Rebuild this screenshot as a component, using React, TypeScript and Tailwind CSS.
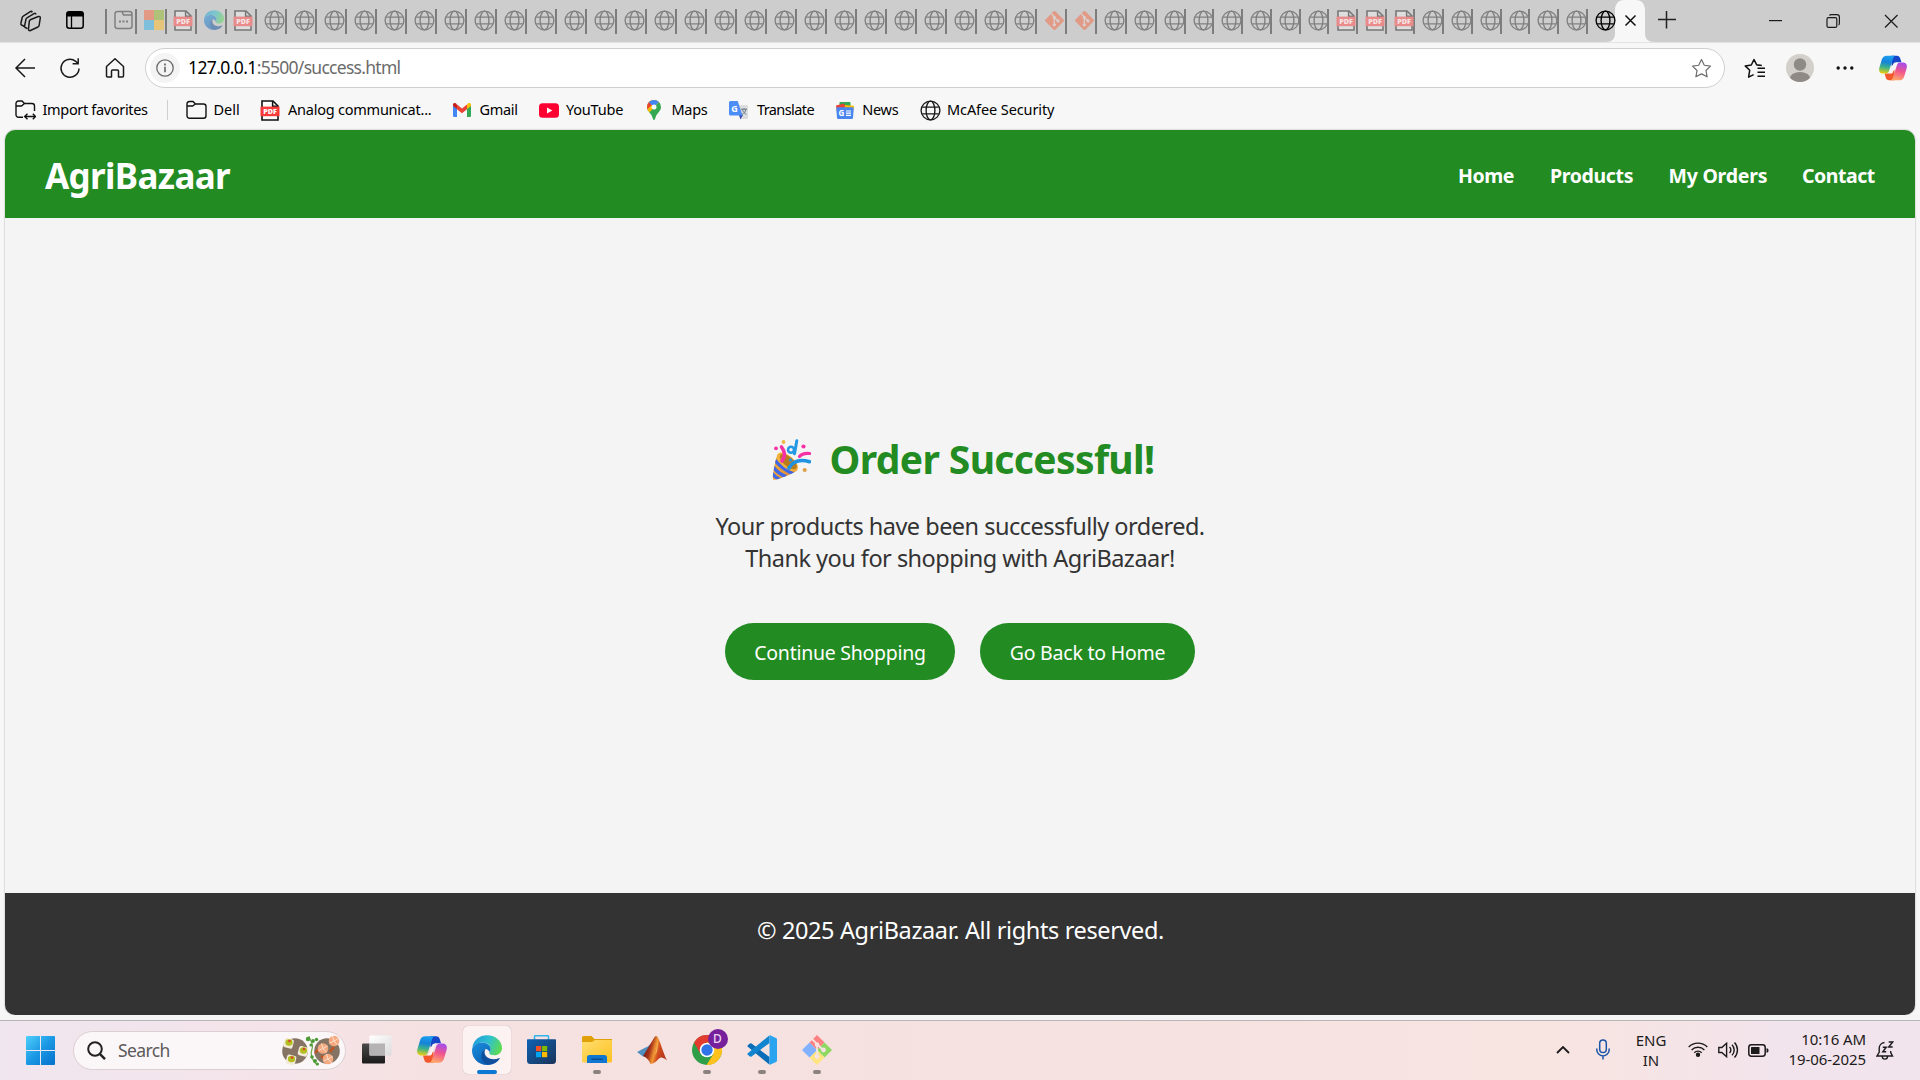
import React, { ReactNode } from 'react';

function Globe({ className = 'text-[#808080]' }: { className?: string }) {
  return (
    <svg className={`block h-[21px] w-[21px] shrink-0 ${className}`} viewBox="0 0 21 21" fill="none" stroke="currentColor" strokeWidth="1.35">
      <circle cx="10.5" cy="10.5" r="9.4" />
      <ellipse cx="10.5" cy="10.5" rx="4.4" ry="9.4" />
      <path d="M2.2 7.1h16.6M2.2 13.9h16.6" />
    </svg>
  );
}

function Pdf({ faded = false }: { faded?: boolean }) {
  return (
    <svg className="block h-[21px] w-[20px] shrink-0" viewBox="0 0 20 21">
      <path d="M2 8V1h11l5 5v14H2v-4" fill={faded ? '#dedede' : '#fff'} stroke={faded ? '#777' : '#111'} strokeWidth="1.6" />
      <path d="M12.6 1v5.2H18" fill="none" stroke={faded ? '#777' : '#111'} strokeWidth="1.5" />
      <rect x="0.5" y="6.6" width="19" height="9.6" fill={faded ? '#e88b8b' : '#f73b3b'} />
      <text x="10" y="14.1" textAnchor="middle" fontSize="7.2" fontWeight="800" fontFamily="Open Sans, sans-serif" fill={faded ? '#f6e4e4' : '#fff'}>PDF</text>
    </svg>
  );
}

function GitTab() {
  return (
    <svg className="block h-[21px] w-[21px] shrink-0" viewBox="0 0 21 21">
      <rect x="3.4" y="3.4" width="14.2" height="14.2" rx="1.2" fill="#e09a86" transform="rotate(45 10.5 10.5)" />
      <path d="M7.5 3.8 10.3 7v8M10.3 7.6l3.6 3.2" stroke="#d8d0ce" strokeWidth="1.3" fill="none" />
      <circle cx="10.3" cy="7.2" r="1.5" fill="#d8d0ce" />
      <circle cx="10.3" cy="14.8" r="1.6" fill="#d8d0ce" />
      <circle cx="14" cy="10.9" r="1.6" fill="#d8d0ce" />
    </svg>
  );
}

function Edge({ className }: { className: string }) {
  return (
    <svg className={className} viewBox="0 0 30 30">
      <defs>
        <linearGradient id="edgeTop" x1="0" y1="0.3" x2="1" y2="0.6">
          <stop offset="0" stopColor="#1f9ed8" />
          <stop offset="0.5" stopColor="#2fc0cf" />
          <stop offset="1" stopColor="#5fdc4e" />
        </linearGradient>
        <linearGradient id="edgeLeft" x1="0" y1="0" x2="0.5" y2="1">
          <stop offset="0" stopColor="#1b8fdc" />
          <stop offset="1" stopColor="#0b62b8" />
        </linearGradient>
      </defs>
      <path d="M0.3 13C1.3 5 7.600.3 15 .3 24 .3 30 6.500 30 13c0 4.500-3.500 7.300-7.500 7.300-3.200 0-5.300-1-5.300-2.300 0-1 1.400-1.300 1.400-4 0-3.400-3.200-6.500-7.600-6.500C6 7.500 2 9.800.3 13z" fill="url(#edgeTop)" />
      <path d="M0 15.500C0 11 4.500 7.500 10.300 7.500c4.600 0 8.300 3 8.300 6.500 0 1.500-.6 2.500-1 3-1-2-2.500-3-4-3-1.500.5-3.100 2.700-3.100 6 0 4.500 3.500 9 8.500 9.500-1.200.4-2.500.5-4 .5C6.500 30 0 23.500 0 15.500z" fill="url(#edgeLeft)" />
      <path d="M13.600 14c-2.500 1-4.300 3.700-4.300 7 0 5 3.700 8.600 9 8.800 4-.8 7.300-3 9.200-5.900.4-.6-.1-1-.7-.7-1.500.7-3.300 1-5 1-5.200 0-9.200-3-9.200-6.700 0-1.500.4-2.600 1-3.500z" fill="#0f4f9e" />
    </svg>
  );
}

function Copilot({ className }: { className: string }) {
  return (
    <svg className={className} viewBox="0 0 30 27">
      <defs>
        <linearGradient id="cpLeft" x1="0.4" y1="0" x2="0.25" y2="1">
          <stop offset="0" stopColor="#1b9df0" />
          <stop offset="0.35" stopColor="#1583d8" />
          <stop offset="0.65" stopColor="#3fb488" />
          <stop offset="1" stopColor="#f2cf0a" />
        </linearGradient>
        <linearGradient id="cpRight" x1="0.7" y1="0" x2="0.45" y2="1">
          <stop offset="0" stopColor="#a24cf0" />
          <stop offset="0.5" stopColor="#f0568c" />
          <stop offset="1" stopColor="#ffa66b" />
        </linearGradient>
      </defs>
      <path d="M13 .3h6c2.200 0 3.200 1.200 3.800 3l1.200 4h-5.500l-5 4z" fill="#1546c8" />
      <path d="M17 26.700h-6c-2.200 0-3.200-1.200-3.800-3L6 19.500h5.500l5-4z" fill="#f2582c" />
      <path d="M8.500.3H18c-1.700.3-2.500 1.500-3 3.200l-4 12.500c-.7 2.300-1.700 3.500-4 3.500H4.500C1 19.500-.5 17 .3 13.500l2.700-9C3.900 1.600 5.500.3 8.500.3z" fill="url(#cpLeft)" />
      <path d="M21.500 26.700H12c1.700-.3 2.500-1.500 3-3.200L19 11c.7-2.300 1.700-3.500 4-3.500h2.500c3.500 0 5 2.500 4.200 6l-2.700 9c-.9 2.900-2.500 4.200-5.500 4.200z" fill="url(#cpRight)" />
      <path d="M17.800 7.500h1.500c-1.200 1-1.700 2.200-2.200 3.800l-2.200 6.800c-.3.900-.9 1.400-1.700 1.400h-2.300c1.200-1 1.700-2.200 2.200-3.800l2.100-6.400c.4-1.100 1.200-1.800 2.600-1.800z" fill="#f8f2f4" />
    </svg>
  );
}

function Tab({ children, narrow = false }: { children: ReactNode; narrow?: boolean }) {
  return (
    <div className={`flex h-[25px] shrink-0 items-start border-r-2 border-[#7d7d7d] pt-px ${narrow ? 'w-[28.73px] pl-[7px]' : 'w-[30px] justify-end'}`}>
      {children}
    </div>
  );
}

function TabStrip() {
  return (
    <div className="flex h-[42px] bg-[#cdcdcd] pt-[9px]">
      <div className="flex h-[25px] w-[107px] shrink-0 border-r-2 border-[#7d7d7d] pl-[19px]">
        <svg className="h-[24px] w-[24px]" viewBox="0 0 24 24" fill="#cdcdcd" stroke="#1a1a1a" strokeWidth="1.5">
          <path d="M5.500 17.500 2.600 16a1.500 1.500 0 0 1-.7-1.800L3.300 8.300a2 2 0 0 1 1-1.200l7-4.500a1.500 1.500 0 0 1 2 .7" />
          <path d="M8.500 19.700 6.300 18.500a1.500 1.500 0 0 1-.7-1.600l1.400-6.800a2 2 0 0 1 1-1.300l7-4.200c.9-.5 1.800-.2 2 .8" />
          <path d="m11.300 10.800 8-3.300c1.200-.4 2.200.3 2 1.500l-1.200 7.500a2 2 0 0 1-1.200 1.500l-7.400 3.500c-1.200.5-2.200-.2-2-1.500l.8-7.700a2 2 0 0 1 1-1.500z" />
        </svg>
        <svg className="ml-[23px] mt-[2px] h-[18px] w-[18px]" viewBox="0 0 18 18">
          <rect x="0.8" y="0.8" width="16.4" height="16.4" rx="2.5" fill="none" stroke="#000" strokeWidth="1.5" />
          <path d="M.5 5.500V3A2.500 2.500 0 0 1 3 .5h12A2.500 2.500 0 0 1 17.500 3v2.500z" />
          <path d="M5.500 5v12" stroke="#000" strokeWidth="1.3" />
        </svg>
      </div>
      <Tab>
        <svg className="mr-[2px] h-[20px] w-[19px]" viewBox="0 0 19 20" fill="none" stroke="#808080" strokeWidth="1.5">
          <rect x="1" y="1.5" width="17" height="17" rx="2.5" />
          <path d="M8 1.500 9.500 5H18" />
          <path d="M5 11.500h2M8.500 11.500h2M12 11.500h2" strokeWidth="2.2" />
        </svg>
      </Tab>
      <Tab>
        <div className="mr-px grid h-[20px] w-[20px] grid-cols-2">
          <div className="bg-[#e29a85]" /><div className="bg-[#afc27a]" />
          <div className="bg-[#7fbfdc]" /><div className="bg-[#e6c578]" />
        </div>
      </Tab>
      <Tab><div className="mr-[2px]"><Pdf faded /></div></Tab>
      <Tab><Edge className="mr-px h-[20px] w-[20px] opacity-50" /></Tab>
      <Tab><div className="mr-[2px]"><Pdf faded /></div></Tab>
      {Array.from({ length: 26 }, (_, i) => <Tab key={i}><Globe /></Tab>)}
      <Tab><GitTab /></Tab>
      <Tab><GitTab /></Tab>
      <Tab><Globe /></Tab>
      <Tab><Globe /></Tab>
      {Array.from({ length: 6 }, (_, i) => <Tab key={i} narrow><Globe /></Tab>)}
      {Array.from({ length: 3 }, (_, i) => <Tab key={i} narrow><Pdf faded /></Tab>)}
      {Array.from({ length: 6 }, (_, i) => <Tab key={i} narrow><Globe /></Tab>)}
      <div className="relative w-[58px] shrink-0">
        <svg className="absolute -top-[9px] left-[18px] h-[42px] w-[50px]" viewBox="0 0 50 42">
          <path d="M0 42c6 0 9-3 9-9V10C9 4 12.500 0 18 0h12c5.500 0 9 4 9 10v23c0 6 3 9 9 9z" fill="#f7f7f7" />
          <path d="m19.500 15.500 10 10m0-10-10 10" stroke="#111" strokeWidth="1.5" />
        </svg>
        <div className="relative ml-[7px] mt-px"><Globe className="text-black" /></div>
      </div>
      <svg className="ml-[11px] mt-[1px] h-[20px] w-[20px] shrink-0" viewBox="0 0 20 20"><path d="M1 9.500h18M9.500 1v17.500" stroke="#222" strokeWidth="1.5" /></svg>
      <svg className="ml-auto mt-[5px] h-[14px] w-[130px] shrink-0" viewBox="0 0 130 14" fill="none" stroke="#1a1a1a" strokeWidth="1.2">
        <path d="M0 6.600h13" />
        <rect x="58" y="3.600" width="9.800" height="9.800" rx="1.5" />
        <path d="M60.400 1.500Q60.900.6 62.400.6h5.500a2.500 2.500 0 0 1 2.500 2.500v6q0 1.500-.8 2" />
        <path d="m116 1 12.500 12.500m0-12.500L116 13.500" />
      </svg>
      <div className="w-[21px] shrink-0" />
    </div>
  );
}

function Toolbar() {
  return (
    <div className="flex h-[48px] items-center border-t border-[#e3e3e3] bg-[#f7f7f7] pb-[2px] pl-[14px] pt-[5px] text-black">
      <svg className="h-[20px] w-[22px]" viewBox="0 0 22 20" fill="none" stroke="#1a1a1a" strokeWidth="1.5"><path d="M21 10H2M11 1 2 10l9 9" /></svg>
      <svg className="ml-[23px] h-[22px] w-[22px]" viewBox="0 0 22 22" fill="none" stroke="#1a1a1a" strokeWidth="1.5"><path d="M20 11.500a9 9 0 1 1-3.300-7.200L19 6.500M19.200 1.200v5.600h-5.600" /></svg>
      <svg className="ml-[24px] h-[22px] w-[20px]" viewBox="0 0 20 22" fill="none" stroke="#1a1a1a" strokeWidth="1.5" strokeLinejoin="round"><path d="M1.500 9.500 10 1.700l8.500 7.800V19a1 1 0 0 1-1 1h-4v-6a1 1 0 0 0-1-1h-5a1 1 0 0 0-1 1v6h-4a1 1 0 0 1-1-1z" /></svg>
      <div className="ml-[20px] flex h-[40px] w-[1580px] shrink-0 items-center rounded-full border border-[#cfcfcf] bg-white pl-[4px] pr-[12px] font-['Noto_Sans',sans-serif] text-[17.5px]">
        <div className="flex h-[30px] w-[30px] items-center justify-center rounded-full bg-[#f4f4f4]">
          <svg className="h-[18px] w-[18px]" viewBox="0 0 18 18" fill="none" stroke="#6a6a6a" strokeWidth="1.3"><circle cx="9" cy="9" r="8.200" /><path d="M9 7.800v5.400" strokeWidth="1.7" /><path d="M9 4.400v2" strokeWidth="1.8" /></svg>
        </div>
        <span className="-mt-[2px] ml-[8px] whitespace-nowrap tracking-[-0.6px]">127.0.0.1</span>
        <span className="-mt-[2px] whitespace-nowrap tracking-[-0.72px] text-[#6b6b6b]">:5500/success.html</span>
        <svg className="ml-auto h-[21px] w-[21px]" viewBox="0 0 24 24" fill="none" stroke="#6e6e6e" strokeWidth="1.4" strokeLinejoin="round"><path d="m12 1.800 3.200 6.500 7.100 1-5.200 5 1.300 7.200L12 18.100l-6.400 3.400 1.300-7.200-5.200-5 7.100-1z" /></svg>
      </div>
      <svg className="ml-[19px] h-[21px] w-[22px] shrink-0" viewBox="0 0 22 21" fill="none" stroke="#111" strokeWidth="1.5" strokeLinejoin="round"><path d="M14.500 7.200 12.700 6.800 10 1.500 7.300 7 1.200 7.900l4.500 4.400-1.100 6.900 5-2.600M14.500 6.900 17.800 7.400M13.500 10.200H21M13.500 14.200H21M13.500 18.200H21" /></svg>
      <svg className="ml-[20px] h-[28px] w-[28px] shrink-0" viewBox="0 0 28 28">
        <clipPath id="avatar"><circle cx="14" cy="14" r="14" /></clipPath>
        <circle cx="14" cy="14" r="14" fill="#d3d0cc" />
        <g clipPath="url(#avatar)" fill="#8f8a86"><circle cx="14" cy="10.500" r="6.200" /><ellipse cx="14" cy="24" rx="10" ry="6" /></g>
      </svg>
      <svg className="ml-[22px] h-[6px] w-[18px] shrink-0" viewBox="0 0 18 6" fill="#111"><circle cx="2.200" cy="3" r="1.700" /><circle cx="9" cy="3" r="1.700" /><circle cx="15.800" cy="3" r="1.700" /></svg>
      <Copilot className="ml-[25px] h-[26px] w-[28px] shrink-0" />
    </div>
  );
}

function Folder({ sync = false }: { sync?: boolean }) {
  return (
    <svg className="h-[20px] w-[21px]" viewBox="0 0 21 20" fill="none" stroke="#111" strokeWidth="1.4">
      {sync ? (
        <>
          <path d="M8 17.300H3.500a2.500 2.500 0 0 1-2.500-2.500V3.500A2.500 2.500 0 0 1 3.500 1H7l2.500 2.500h7.500A2.500 2.500 0 0 1 19.500 6v5M1 6h5.500L9.500 3.500" />
          <path d="M10 16.500h10.500M12.500 13.800l-2.800 2.700 2.800 2.700M17.800 13.800l2.800 2.700-2.800 2.700" />
        </>
      ) : (
        <path d="M1 6V3.800A2.500 2.500 0 0 1 3.500 1.500H7L9.500 4h8A2.500 2.500 0 0 1 20 6.500v9.200a2.500 2.500 0 0 1-2.500 2.500h-14A2.500 2.500 0 0 1 1 15.700zM1 6h5.500L9.500 4" />
      )}
    </svg>
  );
}

function Bookmark({ cell, iconBox, tracking, icon, label }: { cell: string; iconBox: string; tracking: string; icon: ReactNode; label: string }) {
  return (
    <div className={`flex shrink-0 items-center ${cell}`}>
      <div className={`shrink-0 ${iconBox}`}>{icon}</div>
      <span className={`whitespace-nowrap ${tracking}`}>{label}</span>
    </div>
  );
}

function BookmarksBar() {
  return (
    <div className="flex h-[40px] items-center bg-[#f7f7f7] pl-[15px] font-['Noto_Sans',sans-serif] text-[14.5px] text-black">
      <Bookmark cell="w-[152px]" iconBox="w-[27.5px]" tracking="tracking-[-0.33px]" icon={<Folder sync />} label="Import favorites" />
      <div className="mr-[18px] h-[20px] w-px shrink-0 bg-[#cfcfcf]" />
      <Bookmark cell="w-[74px]" iconBox="w-[27.5px]" tracking="tracking-[0px]" icon={<Folder />} label="Dell" />
      <Bookmark cell="w-[193px]" iconBox="w-[28px]" tracking="tracking-[-0.23px]" icon={<Pdf />} label="Analog communicat..." />
      <Bookmark
        cell="w-[86px]" iconBox="w-[26.5px]" tracking="tracking-[-0.33px]" label="Gmail"
        icon={
          <svg className="h-[14px] w-[18px]" viewBox="0 0 18 14">
            <path d="M0 2.500v10.300A1.200 1.200 0 0 0 1.200 14H4V5.500z" fill="#4285f4" />
            <path d="M18 2.500v10.300a1.200 1.200 0 0 1-1.200 1.200H14V5.500z" fill="#34a853" />
            <path d="M14 1.500V6l4-3V1.800C18 .2 16.200-.5 15 .5z" fill="#fbbc04" />
            <path d="M0 1.800V3l4 3V1.500L3 .5C1.800-.5 0 .2 0 1.800z" fill="#c5221f" />
            <path d="M4 1.500v4.700l5 4 5-4V1.500L9 5.500z" fill="#ea4335" />
          </svg>
        }
      />
      <Bookmark
        cell="w-[108px]" iconBox="w-[27px]" tracking="tracking-[-0.2px]" label="YouTube"
        icon={<svg className="h-[15px] w-[20px]" viewBox="0 0 20 15"><rect width="20" height="14.5" y="0.3" rx="3.5" fill="#ff0033" /><path d="m8 4.500 5.300 3L8 10.500z" fill="#fff" /></svg>}
      />
      <Bookmark
        cell="w-[82px]" iconBox="w-[24.5px]" tracking="tracking-[-0.3px]" label="Maps"
        icon={
          <svg className="h-[20px] w-[14px]" viewBox="0 0 14 20">
            <clipPath id="pin"><path d="M7 0a7 7 0 0 1 7 7c0 4.500-4.300 6-5.500 10.500C8.100 19 7.800 20 7 20s-1.100-1-1.500-2.500C4.300 13 0 11.500 0 7a7 7 0 0 1 7-7z" /></clipPath>
            <g clipPath="url(#pin)">
              <path d="M0 0h14v20H0z" fill="#34a853" />
              <path d="M0 15 14 0H0z" fill="#fbbc04" />
              <path d="M0 9.500 7 3 3 0H0z" fill="#ea4335" />
              <path d="M2 2.500 7 7l7-7H3z" fill="#4285f4" />
            </g>
            <circle cx="7" cy="7" r="2.500" fill="#f7f7f7" />
          </svg>
        }
      />
      <Bookmark
        cell="w-[107px]" iconBox="w-[28px]" tracking="tracking-[-0.6px]" label="Translate"
        icon={
          <svg className="h-[20px] w-[20px]" viewBox="0 0 20 20">
            <path d="M8 5h9.500A1.500 1.500 0 0 1 19 6.500v11a1.500 1.500 0 0 1-1.500 1.500H11z" fill="#dcdcdc" />
            <path d="m10 15 4 0-2.500 4.500z" fill="#3c4fb0" />
            <path d="M1.500 1h7.200l4.800 14.500h-12A1.500 1.500 0 0 1 0 14V2.500A1.500 1.500 0 0 1 1.500 1z" fill="#4d8df6" />
            <text x="2.2" y="11.5" fontSize="9" fontWeight="700" fontFamily="Open Sans, sans-serif" fill="#fff">G</text>
            <path d="M12 9.200h6M15 8v1.200M17 9.200c-.5 2.500-2.500 4.500-4 5.300M13.300 9.500c.8 2.500 2.500 4 4 5" stroke="#66788a" fill="none" />
          </svg>
        }
      />
      <Bookmark
        cell="w-[83.5px]" iconBox="w-[26.3px]" tracking="tracking-[-0.3px]" label="News"
        icon={
          <svg className="h-[17px] w-[18px]" viewBox="0 0 18 17">
            <rect x="3.5" y="0" width="11" height="6" rx="0.8" fill="#34a853" />
            <path d="M0 3.500 8 1.500l2 5-1 10-7.500-2z" fill="#ea4335" />
            <path d="m9 3 9 .8-1.500 10H8z" fill="#fbbc04" />
            <path d="M.3 6.500A1.200 1.200 0 0 1 1.500 5.300h15a1.200 1.200 0 0 1 1.200 1.200L17 16a1.200 1.200 0 0 1-1.200 1H2.200A1.200 1.200 0 0 1 1 16z" fill="#4a86f0" />
            <text x="2.6" y="14" fontSize="8" fontWeight="700" fontFamily="Open Sans, sans-serif" fill="#fff">G</text>
            <path d="M10 9h5M10 11.200h5M10 13.400h5" stroke="#fff" strokeWidth="1.2" />
          </svg>
        }
      />
      <Bookmark cell="" iconBox="w-[27.5px]" tracking="tracking-[-0.1px]" icon={<Globe className="text-[#1a1a1a]" />} label="McAfee Security" />
    </div>
  );
}

function Party() {
  return (
    <svg className="h-[41px] w-[39px] shrink-0" viewBox="0 0 39 41">
      <defs>
        <linearGradient id="cone" x1="0" y1="0" x2="1" y2="0.5"><stop offset="0" stopColor="#f7b13a" /><stop offset="1" stopColor="#d98a3c" /></linearGradient>
        <clipPath id="coneClip"><path d="M6 15C4 17 .8 34 .9 39.500c0 1 .8 1.500 2 1.300C9 39.500 22 34.500 25.500 31 20 29 10 22 6 15z" /></clipPath>
      </defs>
      <path d="M6 15C4 17 .8 34 .9 39.500c0 1 .8 1.500 2 1.300C9 39.500 22 34.500 25.500 31 20 29 10 22 6 15z" fill="url(#cone)" />
      <g clipPath="url(#coneClip)" fill="none" stroke="#3f66e8" strokeWidth="3.2">
        <path d="M2 20c5 7 10 11 20 15M0 26.500c4 5.500 8 9 14 11M-1 33c3 4 5 6 9 7.500" />
      </g>
      <ellipse cx="15.500" cy="23" rx="12.500" ry="6.300" transform="rotate(40 15.5 23)" fill="#f2b13a" />
      <ellipse cx="16.300" cy="22.600" rx="10.500" ry="4.700" transform="rotate(40 16.3 22.6)" fill="#b97b1c" />
      <path d="M10 22c3-4 3.800-8.500-.5-14" fill="none" stroke="#f531a5" strokeWidth="3.6" strokeLinecap="round" />
      <path d="M17 29c4-7 11-9 20.500-6.300" fill="none" stroke="#1f93e3" strokeWidth="3.6" strokeLinecap="round" />
      <path d="M27.500 17.500c2-2.500 5-3.500 10-3" fill="none" stroke="#f531a5" strokeWidth="3.2" strokeLinecap="round" />
      <path d="M24.800 1.800c-.8 4-1.300 8-2.300 13" fill="none" stroke="#2399e6" strokeWidth="3" strokeLinecap="round" />
      <circle cx="19" cy="10.800" r="3" fill="none" stroke="#2399e6" strokeWidth="2.6" />
      <circle cx="11.500" cy="3" r="1.900" fill="#f1b740" /><circle cx="4" cy="9.300" r="1.900" fill="#f531a5" />
      <circle cx="31.500" cy="7.500" r="2.100" fill="#f531a5" /><circle cx="32.700" cy="31" r="2.100" fill="#dca047" />
      <circle cx="18.500" cy="21" r="1.800" fill="#2b95e0" />
    </svg>
  );
}

function Page() {
  return (
    <div className="mx-[5px] flex h-[885px] flex-col overflow-hidden rounded-[10px] bg-[#f4f4f4] font-['Noto_Sans',sans-serif] shadow-[0_0_2px_rgba(0,0,0,0.35)]">
      <header className="flex h-[88px] shrink-0 items-center justify-between bg-[#228b22] pl-10 pr-[39px] pt-[4px] text-white">
        <h1 className="text-[35px] font-bold tracking-[-0.65px]">AgriBazaar</h1>
        <nav className="flex gap-[35px] whitespace-nowrap text-[19.5px] font-bold">
          <a className="w-[57px] tracking-[-0.45px]">Home</a>
          <a className="w-[83.5px] tracking-[-0.35px]">Products</a>
          <a className="w-[98.5px] tracking-[-0.23px]">My Orders</a>
          <a className="w-[74px] tracking-[-0.48px]">Contact</a>
        </nav>
      </header>
      <main className="flex flex-1 flex-col items-center pt-[214px]">
        <h2 className="flex h-[54px] items-center gap-[19px] whitespace-nowrap pl-[6px] text-[39px] font-bold leading-[54px] tracking-[-0.63px] text-[#228b22]">
          <Party />
          <span>Order Successful!</span>
        </h2>
        <p className="mt-6 text-center text-[23.5px] leading-8 tracking-[-0.52px] text-[#333333]">
          Your products have been successfully ordered.<br />Thank you for shopping with AgriBazaar!
        </p>
        <div className="mt-[49px] flex gap-[25px] text-[19.5px] text-white">
          <a className="flex h-[57px] w-[230px] items-center justify-center rounded-full bg-[#228b22] pt-[2px] tracking-[-0.27px]">Continue Shopping</a>
          <a className="flex h-[57px] w-[215px] items-center justify-center rounded-full bg-[#228b22] pt-[2px] tracking-[-0.22px]">Go Back to Home</a>
        </div>
      </main>
      <footer className="h-[122px] shrink-0 bg-[#333333] pl-px pt-[21px] text-center text-[23.5px] leading-8 tracking-[-0.37px] text-white">
        © 2025 AgriBazaar. All rights reserved.
      </footer>
    </div>
  );
}

function TaskIcon({ children, running = false, active = false }: { children: ReactNode; running?: boolean; active?: boolean }) {
  return (
    <div className="flex w-[55px] shrink-0 justify-center pt-[5px]">
      <div className={`relative flex h-[48px] w-[48px] items-center justify-center rounded-[5px] pb-px ${active ? 'bg-[#fbf2f1] shadow-[0_0_1px_rgba(0,0,0,0.3)]' : ''}`}>
        {children}
        {running && <div className="absolute bottom-0 h-[4px] w-[8px] rounded-full bg-[#8b8280]" />}
        {active && <div className="absolute bottom-0 h-[4px] w-[20px] rounded-full bg-[#0b78d4]" />}
      </div>
    </div>
  );
}

function Food() {
  const canapes = [[6.5, 7.5], [21, 15.5], [9, 24]];
  const shrimps = [[52, 6], [41, 13.5], [46, 24]];
  return (
    <svg className="block h-[31px] w-[59px]" viewBox="0 0 59 31">
      <circle cx="13" cy="16" r="12.800" fill="#857463" />
      <circle cx="45" cy="16" r="12.800" fill="#857463" />
      {canapes.map(([x, y]) => (
        <g key={x}>
          <rect x={x - 4.5} y={y - 4} width="9.5" height="9.5" rx="2" fill="#f3ead8" transform={`rotate(15 ${x} ${y})`} />
          <ellipse cx={x + 0.5} cy={y} rx="3.600" ry="3.200" fill="#b3bf20" />
          <circle cx={x + 1} cy={y - 1.5} r="1.300" fill="#d8442a" />
        </g>
      ))}
      <path d="m33 18 4-4M48 17l4-5M39 21l3 2" stroke="#c4531f" strokeWidth="2.4" />
      {shrimps.map(([x, y]) => (
        <g key={x}>
          <circle cx={x} cy={y} r="5.300" fill="#f6a87e" />
          <path d={`M${x} ${y}l4.500-2.500M${x} ${y}l3.500 4M${x} ${y}l-4.500 2M${x} ${y}l-1.500-5`} stroke="#fbe0d0" strokeWidth="1" />
        </g>
      ))}
      <path d="M27 1c1 5 5 8 3 13s-1 10 5 16" fill="none" stroke="#6da349" strokeWidth="1.2" />
      <g fill="#4c9a35">
        <circle cx="26" cy="4" r="2.200" /><circle cx="31" cy="6" r="1.900" /><circle cx="34.500" cy="4.500" r="1.700" />
        <circle cx="29" cy="10" r="1.600" /><circle cx="30" cy="22" r="1.800" /><circle cx="33" cy="26" r="2" /><circle cx="35.500" cy="29" r="1.500" />
      </g>
    </svg>
  );
}

function Taskbar() {
  return (
    <div className="flex h-[60px] border-t border-[#b9b4b5] bg-[linear-gradient(90deg,#f0e6ef_0px,#f4e4ea_260px,#f5e1e1_420px,#f5e2e0_900px,#f8e4e1_1560px,#f2e4ec_1780px,#f1e4ec_1920px)] font-['Noto_Sans',sans-serif]">
      <div className="ml-[26px] mt-[15px] h-[29px] w-[29px] shrink-0">
        <svg viewBox="0 0 29 29">
          <defs><linearGradient id="win" x1="0" y1="0" x2="29" y2="29" gradientUnits="userSpaceOnUse"><stop offset="0" stopColor="#4fd0fb" /><stop offset="0.5" stopColor="#1b98e4" /><stop offset="1" stopColor="#0670cb" /></linearGradient></defs>
          <path d="M0 1a1 1 0 0 1 1-1h13v14H0zM15 0h13a1 1 0 0 1 1 1v13H15zM0 15h14v14H1a1 1 0 0 1-1-1zM15 15h14v13a1 1 0 0 1-1 1H15z" fill="url(#win)" />
        </svg>
      </div>
      <div className="ml-[18px] mt-[10px] flex h-[39px] w-[273px] shrink-0 items-center rounded-full border border-[#dccfd2] bg-[#fbf7f8] pl-[13px] pr-[4px]">
        <svg className="h-[19px] w-[19px]" viewBox="0 0 19 19" fill="none" stroke="#222" strokeWidth="2"><circle cx="8" cy="8" r="6.800" /><path d="m12.800 12.800 5.200 5.400" strokeWidth="2.4" /></svg>
        <span className="ml-[12px] text-[17.5px] tracking-[-0.6px] text-[#5d5a5b]">Search</span>
        <div className="ml-auto"><Food /></div>
      </div>
      <div className="ml-[3px] flex">
        <TaskIcon>
          <svg className="h-[29px] w-[30px]" viewBox="0 0 30 29">
            <defs>
              <linearGradient id="tvDark" x1="0" y1="0" x2="0" y2="1"><stop offset="0" stopColor="#4a4a4a" /><stop offset="1" stopColor="#1b1b1b" /></linearGradient>
              <linearGradient id="tvLight" x1="0" y1="0" x2="1" y2="1"><stop offset="0" stopColor="#fff" /><stop offset="1" stopColor="#dcdcdc" /></linearGradient>
            </defs>
            <rect x="0" y="8.500" width="23" height="20" rx="1" fill="url(#tvDark)" />
            <rect x="7.500" y="0.500" width="22" height="20" rx="1" fill="url(#tvLight)" />
            <rect x="7.500" y="8.500" width="15.500" height="12" fill="#b5b3b3" />
          </svg>
        </TaskIcon>
        <TaskIcon><Copilot className="h-[27px] w-[30px]" /></TaskIcon>
        <TaskIcon active><Edge className="h-[30px] w-[30px]" /></TaskIcon>
        <TaskIcon>
          <svg className="h-[29px] w-[29px]" viewBox="0 0 29 29">
            <defs><linearGradient id="store" x1="0" y1="0" x2="1" y2="1"><stop offset="0" stopColor="#0d62b4" /><stop offset="1" stopColor="#1b3358" /></linearGradient></defs>
            <path d="M7.500 6V1.500a.8.800 0 0 1 .8-.8h12.400a.8.800 0 0 1 .8.800V6" fill="none" stroke="#2fb4ee" strokeWidth="1.5" />
            <path d="M0 5a.8.800 0 0 1 .8-.8h27.400A.8.800 0 0 1 29 5v20.500a3.500 3.500 0 0 1-3.500 3.500h-22A3.500 3.500 0 0 1 0 25.500z" fill="url(#store)" />
            <path d="M9 11h5.200v5.200H9z" fill="#f25022" /><path d="M15 11h5.200v5.200H15z" fill="#7fba00" />
            <path d="M9 17h5.200v5.200H9z" fill="#00a4ef" /><path d="M15 17h5.200v5.200H15z" fill="#ffb900" />
          </svg>
        </TaskIcon>
        <TaskIcon running>
          <svg className="h-[27px] w-[30px]" viewBox="0 0 30 27">
            <defs><linearGradient id="fold" x1="0" y1="0" x2="1" y2="1"><stop offset="0" stopColor="#ffdd70" /><stop offset="1" stopColor="#fdc221" /></linearGradient></defs>
            <path d="M0 1.500A1.500 1.500 0 0 1 1.500 0h8l3 3H30v5H0z" fill="#dfa008" />
            <path d="M0 6h10l3-2h16a1 1 0 0 1 1 1v20a1.500 1.500 0 0 1-1.500 1.500h-27A1.500 1.500 0 0 1 0 25z" fill="url(#fold)" />
            <path d="M5 21.500A2.500 2.500 0 0 1 7.500 19h15a2.500 2.500 0 0 1 2.500 2.500V27H5z" fill="#0f77cf" />
            <path d="M10 23.200h10" stroke="#0b4d93" strokeWidth="1.6" strokeLinecap="round" />
          </svg>
        </TaskIcon>
        <TaskIcon>
          <svg className="h-[28px] w-[30px]" viewBox="0 0 30 28">
            <defs><linearGradient id="mat" x1="0" y1="0" x2="1" y2="0.3"><stop offset="0" stopColor="#4a1018" /><stop offset="0.4" stopColor="#a8321a" /><stop offset="0.6" stopColor="#f29a35" /><stop offset="0.75" stopColor="#d04a1c" /><stop offset="1" stopColor="#b5371b" /></linearGradient></defs>
            <path d="m0 16 8.500-4.500c2 0 4-2.500 5.500-4.500l-5 13-3 .5z" fill="#4f8fc0" />
            <path d="M6 20 14 7c2-3 3.500-7 5-7 3 0 6 14 11 24.500-5-4-6.500-3.500-9-1-2.500 2.500-4 4-7.500 4.500-1-3-3.500-6.500-7.500-8z" fill="url(#mat)" />
            <path d="M19.300 1c1.500 5 .7 12-1.300 18 2.500-3 3.500-10 1.300-18z" fill="#f9c872" />
          </svg>
        </TaskIcon>
        <TaskIcon running>
          <svg className="h-[30px] w-[30px]" viewBox="0 0 30 30">
            <circle cx="15" cy="15" r="15" fill="#2f9e48" />
            <path d="M2 7.500A15 15 0 0 1 28 7.500H15L8.500 18.700z" fill="#e33b2e" />
            <path d="M28 7.500A15 15 0 0 1 14.500 30l7-11.300L15 7.500z" fill="#fcc21b" />
            <circle cx="15" cy="15" r="7.300" fill="#fff" />
            <circle cx="15" cy="15" r="5.700" fill="#2f74e8" />
          </svg>
          <div className="absolute left-[25px] top-[3px] flex h-[20px] w-[20px] items-center justify-center rounded-full bg-[#77209c] text-[12px] font-medium leading-none text-[#ead6f2]">D</div>
        </TaskIcon>
        <TaskIcon running>
          <svg className="h-[30px] w-[30px]" viewBox="0 0 30 30">
            <path d="M.8 10.300 2.600 8.700a1.600 1.600 0 0 1 2-.1L22.500 22v7.200c-.5 0-1-.2-1.500-.6L.8 11.800a1 1 0 0 1 0-1.500z" fill="#0a6db8" />
            <path d="M.8 19.700 2.600 21.300a1.600 1.600 0 0 0 2 .1L22.500 8V.8c-.5 0-1 .2-1.500.6L.8 18.200a1 1 0 0 0 0 1.500z" fill="#1184cf" />
            <path d="m22.500 0 6.500 3a1.700 1.700 0 0 1 1 1.500v21a1.700 1.700 0 0 1-1 1.500l-6.500 3z" fill="#2aa4ee" />
          </svg>
        </TaskIcon>
        <TaskIcon running>
          <svg className="h-[30px] w-[30px]" viewBox="0 0 30 30">
            <path d="M15 0 22.500 7.500 15 15 7.500 7.500z" fill="#ff8080" />
            <path d="M22.500 7.500 30 15l-7.500 7.500L15 15z" fill="#8cd860" />
            <path d="M15 15l7.500 7.500L15 30l-7.500-7.500z" fill="#ffe482" />
            <path d="M7.500 7.500 15 15l-7.500 7.500L0 15z" fill="#82b1ff" />
            <path d="M9.500 3.500 15 9v13M15 9l6 6" stroke="#f5e3e1" strokeWidth="1.8" fill="none" />
            <circle cx="15" cy="9.500" r="2.200" fill="#f5e3e1" /><circle cx="21.500" cy="15" r="2.400" fill="#f5e3e1" /><circle cx="15" cy="21.500" r="2.400" fill="#f5e3e1" />
          </svg>
        </TaskIcon>
      </div>
      <div className="ml-auto flex shrink-0 text-[15px] leading-5 text-[#1c1a1b]">
        <svg className="mt-[25px] h-[8px] w-[14px]" viewBox="0 0 14 8" fill="none" stroke="#1c1a1b" strokeWidth="1.8"><path d="m1 7 6-6 6 6" /></svg>
        <svg className="ml-[26px] mt-[18px] h-[21px] w-[14px]" viewBox="0 0 14 21" fill="none" stroke="#1b56a8" strokeWidth="1.5"><rect x="3.7" y="1" width="6.6" height="12.5" rx="3.3" /><path d="M.8 9.500v1.200a6.200 6.200 0 0 0 12.400 0V9.500M7 17v3.500" /></svg>
        <div className="ml-[25px] mt-[9px] w-[32px] text-center">ENG<br />IN</div>
        <svg className="ml-[21px] mt-[20px] h-[16px] w-[20px]" viewBox="0 0 20 16" fill="none" stroke="#1c1a1b" strokeWidth="1.4"><path d="M.7 6a13.200 13.200 0 0 1 18.600 0M3.600 8.900a9 9 0 0 1 12.800 0M6.300 11.700a5.200 5.200 0 0 1 7.400 0" /><circle cx="10" cy="13.800" r="1.500" fill="#1c1a1b" /></svg>
        <svg className="ml-[10px] mt-[20px] h-[18px] w-[21px]" viewBox="0 0 21 18" fill="none" stroke="#1c1a1b" strokeWidth="1.4"><path d="M.8 6.500v5h3l4.800 4.300V2.200L3.800 6.500zM11.500 6a4 4 0 0 1 0 6M14 3.700a7.500 7.500 0 0 1 0 10.600M16.500 1.500a11 11 0 0 1 0 15" /></svg>
        <svg className="ml-[9px] mt-[23px] h-[13px] w-[21px]" viewBox="0 0 21 13"><rect x="0.8" y="0.8" width="16.4" height="11.4" rx="2.6" fill="none" stroke="#1c1a1b" strokeWidth="1.5" /><rect x="3" y="3" width="8.5" height="7" rx="0.6" fill="#1c1a1b" /><path d="M18.500 4.300c1.700.2 2 1.200 2 2.200s-.3 2-2 2.200z" fill="#1c1a1b" /></svg>
        <div className="ml-[17px] mt-[8px] w-[80px] text-right tracking-[-0.08px]">10:16 AM<br />19-06-2025</div>
        <svg className="ml-[10px] mt-[20px] h-[19px] w-[18px]" viewBox="0 0 18 19" fill="none" stroke="#1c1a1b" strokeWidth="1.4">
          <path d="M8.500 1.500A5.800 5.800 0 0 0 3.200 7.300v4L1 15h15.500l-1.800-3.500V10M6.300 15.500a2.600 2.600 0 0 0 5.200 0" />
          <path d="M6.800 6.300h3.400l-3.400 4.400h3.400M12.700 1h4l-4 5h4" />
        </svg>
        <div className="w-[26px]" />
      </div>
    </div>
  );
}

export default function App() {
  return (
    <div className="h-[1080px] w-[1920px] overflow-hidden bg-[#f7f7f7]">
      <TabStrip />
      <Toolbar />
      <BookmarksBar />
      <Page />
      <div className="h-[5px] bg-[#f6f5f6]" />
      <Taskbar />
    </div>
  );
}
